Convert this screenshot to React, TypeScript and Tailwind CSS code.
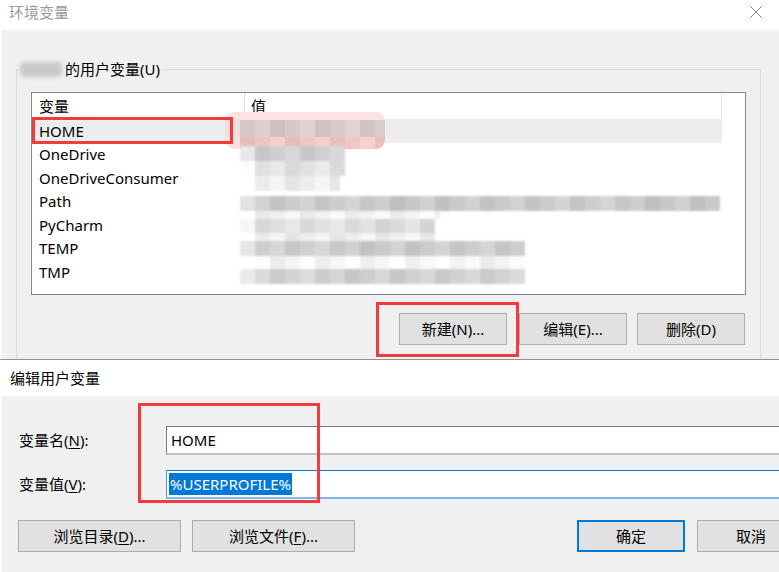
import React from 'react';

const FONT = '"Noto Sans", "Noto Sans CJK SC", sans-serif';

const names = ['HOME', 'OneDrive', 'OneDriveConsumer', 'Path', 'PyCharm', 'TEMP', 'TMP'];

// privacy mosaic over the value column: [height, width, tone]
const bands: [number, number, number][] = [
  [15, 105, 207],
  [15, 105, 228],
  [15, 100, 236],
  [5, 0, 255],
  [15, 480, 202],
  [8, 200, 243],
  [14, 195, 222],
  [8, 195, 238],
  [15, 285, 205],
  [13, 285, 246],
  [15, 285, 209],
];

const shade = (tone: number, i: number, j: number, tint = 0) => {
  const n = ((i * 37 + j * 91 + 13) % 17) - 8;
  const v = Math.max(0, Math.min(255, tone + Math.round(n * 1.4)));
  return `rgb(${Math.min(255, v + tint)},${v},${v + (tint ? 0 : 2)})`;
};

const Mosaic: React.FC<{ width: number; height: number; tone: number; row: number; tint?: number }> = ({
  width,
  height,
  tone,
  row,
  tint,
}) => {
  const cols = Math.ceil(width / 15);
  return (
    <div className="flex overflow-hidden" style={{ height, width }}>
      {Array.from({ length: cols }).map((_, j) => (
        <div
          key={j}
          className="w-[15px] shrink-0 h-full"
          style={{ background: j === 0 ? `rgb(${Math.min(255, tone + 25 + (tint || 0))},${tone + 25},${tone + 25})` : shade(tone, row, j, tint) }}
        />
      ))}
    </div>
  );
};

const Btn: React.FC<{ children: React.ReactNode; w?: string; primary?: boolean }> = ({ children, w = 'w-[108px]', primary }) => (
  <button
    className={`${w} h-[32px] shrink-0 bg-[#e1e1e1] text-[15px] text-black flex items-center justify-center ${
      primary ? 'border-2 border-[#0078d7]' : 'border border-[#adadad]'
    }`}
  >
    {children}
  </button>
);

const App: React.FC = () => {
  return (
    <div className="w-[779px] h-[572px] overflow-hidden bg-white" style={{ fontFamily: FONT }}>
      {/* 环境变量 window */}
      <div className="h-[360px] overflow-hidden flex flex-col border-b border-[#9a9a9a]">
        <div className="h-[30px] shrink-0 bg-white flex items-start justify-between pl-[9px] pr-[16px]">
          <span className="text-[15px] leading-[20px] pt-[2px] text-[#9a9a9a]">环境变量</span>
          <svg width="14" height="14" viewBox="0 0 14 14" className="mt-[5px]">
            <path d="M1 1 L13 13 M13 1 L1 13" stroke="#8f8f8f" strokeWidth="1" fill="none" />
          </svg>
        </div>
        <div className="flex-1 bg-[#f0f0f0] border-l-2 border-[#fafafa] pl-[14px] pr-[18px] pt-[29px]">
          <fieldset className="border border-[#dcdcdc] h-[400px]">
            <legend className="ml-[2px] px-[1px] text-[15px] leading-[20px] text-black flex items-center">
              <span className="inline-block w-[42px] h-[15px] mr-[3px] rounded-[4px] bg-[#c9c9c9] blur-[2px]" />
              的用户变量(U)
            </legend>
            <div className="px-[14px] pt-[13px]">
              <div className="relative h-[203px] border border-[#828790] bg-white flex text-[15px] text-black">
                <div className="w-[690px] flex flex-col">
                  <div className="h-[26px] shrink-0 flex border-r border-[#e5e5e5]">
                    <div className="w-[213px] pl-[7px] flex items-center border-r border-[#e5e5e5]">变量</div>
                    <div className="pl-[6px] flex items-center">值</div>
                  </div>
                  {names.map((n, i) => (
                    <div
                      key={n}
                      className={`h-[23.5px] shrink-0 flex items-center pl-[7px] ${i === 0 ? 'bg-[#ededed]' : ''}`}
                    >
                      {n}
                    </div>
                  ))}
                </div>

                {/* masked values */}
                <div className="absolute left-[193px] top-[19px] w-[160px] h-[37px] rounded-[9px] overflow-hidden flex flex-col blur-[0.6px]">
                  <div className="h-[8px] bg-[#fbe3e3]" />
                  <Mosaic width={160} height={17} tone={200} row={2} tint={14} />
                  <Mosaic width={160} height={12} tone={198} row={5} tint={44} />
                </div>
                <div className="absolute left-[208px] top-[53px] flex flex-col blur-[0.8px]">
                  {bands.map(([h, w, t], i) => (
                    <Mosaic key={i} width={w} height={h} tone={t} row={i} />
                  ))}
                </div>

                {/* annotation */}
                <div className="absolute left-0 top-[24px] w-[201px] h-[27px] border-[3px] border-[#f23b3b]" />
              </div>

              <div className="relative flex justify-end mt-[18px] mr-[1px]">
                <Btn>新建(N)...</Btn>
                <div className="ml-[12px]"><Btn>编辑(E)...</Btn></div>
                <div className="ml-[10px]"><Btn>删除(D)</Btn></div>
                <div className="absolute left-[345px] top-[-11px] w-[143px] h-[55px] border-[3px] border-[#f23b3b]" />
              </div>
            </div>
          </fieldset>
        </div>
      </div>

      {/* 编辑用户变量 dialog */}
      <div className="w-[823px] shadow-[0_-3px_8px_rgba(0,0,0,0.08)]">
        <div className="h-[36px] bg-white flex items-center pl-[10px] text-[15px] text-black">编辑用户变量</div>
        <div className="relative h-[176px] bg-[#f0f0f0] border-l-2 border-[#fafafa] pl-[16px] pr-[18px] pt-[30px] text-[15px] text-black">
          <div className="flex items-center h-[29px]">
            <div className="w-[148px] pl-[1px]">
              变量名(<span className="underline underline-offset-2">N</span>):
            </div>
            <div className="flex-1 h-[29px] bg-white border border-[#7a7a7a] border-b-2 border-b-[#c4c4c4] flex items-center pl-[4px]">
              HOME
            </div>
          </div>
          <div className="flex items-center h-[29px] mt-[15px]">
            <div className="w-[148px] pl-[1px]">
              变量值(<span className="underline underline-offset-2">V</span>):
            </div>
            <div className="flex-1 h-[29px] bg-white border border-[#4a9be0] border-t-[#0078d7] border-b-2 border-b-[#7db8ec] flex items-center pl-[2px]">
              <span className="bg-[#0078d7] text-white h-[22px] leading-[22px] px-[1px]">%USERPROFILE%</span>
            </div>
          </div>
          <div className="flex items-center justify-between mt-[21px]">
            <div className="flex gap-[11px]">
              <Btn w="w-[163px]">
                浏览目录(<span className="underline underline-offset-2">D</span>)...
              </Btn>
              <Btn w="w-[163px]">
                浏览文件(<span className="underline underline-offset-2">F</span>)...
              </Btn>
            </div>
            <div className="flex gap-[12px]">
              <Btn primary>确定</Btn>
              <Btn>取消</Btn>
            </div>
          </div>
          {/* annotation */}
          <div className="absolute left-[136px] top-[7px] w-[182px] h-[100px] border-[3px] border-[#f23b3b]" />
        </div>
      </div>
    </div>
  );
};

export default App;
